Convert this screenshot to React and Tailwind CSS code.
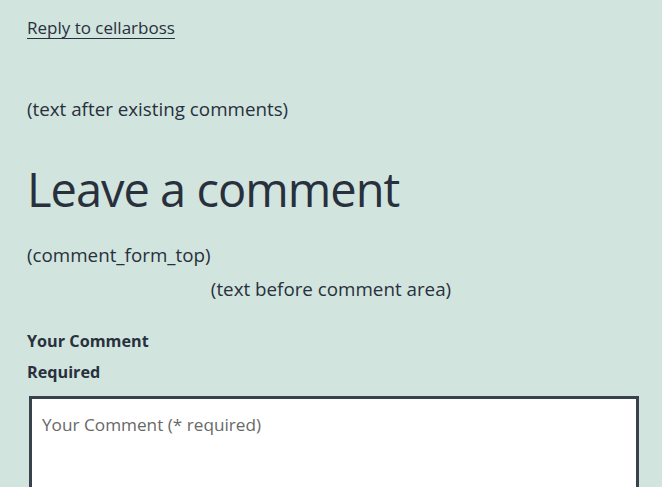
export default function App() {
  return (
    <div className="h-[487px] bg-[#d1e4dd] text-[#28303d] font-['Open_Sans',sans-serif] overflow-hidden">
      <div className="pl-[27px] pt-[14px]">
        <a href="#" className="text-[17px] leading-[27px] underline underline-offset-[4px] decoration-[1px]">
          Reply to cellarboss
        </a>
        <p className="mt-[55px] text-[18.8px] leading-[27px]">(text after existing comments)</p>
        <h2 className="mt-[37px] text-[47px] leading-[58px] tracking-[-1px]">Leave a comment</h2>
        <p className="mt-[24px] text-[18.8px] leading-[27px]">(comment_form_top)</p>
      </div>
      <p className="mt-[7px] text-center text-[18.8px] leading-[27px]">(text before comment area)</p>
      <div className="pl-[27px] mt-[25px]">
        <div className="text-[16.2px] leading-[26px] font-bold">Your Comment</div>
        <div className="mt-[5px] text-[16.2px] leading-[26px] font-bold">Required</div>
      </div>
      <textarea
        placeholder="Your Comment (* required)"
        className="block mt-[11px] ml-[29px] w-[610px] h-[140px] bg-white border-[3px] border-[#39414d] px-[10px] pt-[13px] pb-[10px] text-[17.2px] leading-[26px] resize-none placeholder:text-[#686868] font-['Open_Sans',sans-serif]"
      />
    </div>
  );
}
